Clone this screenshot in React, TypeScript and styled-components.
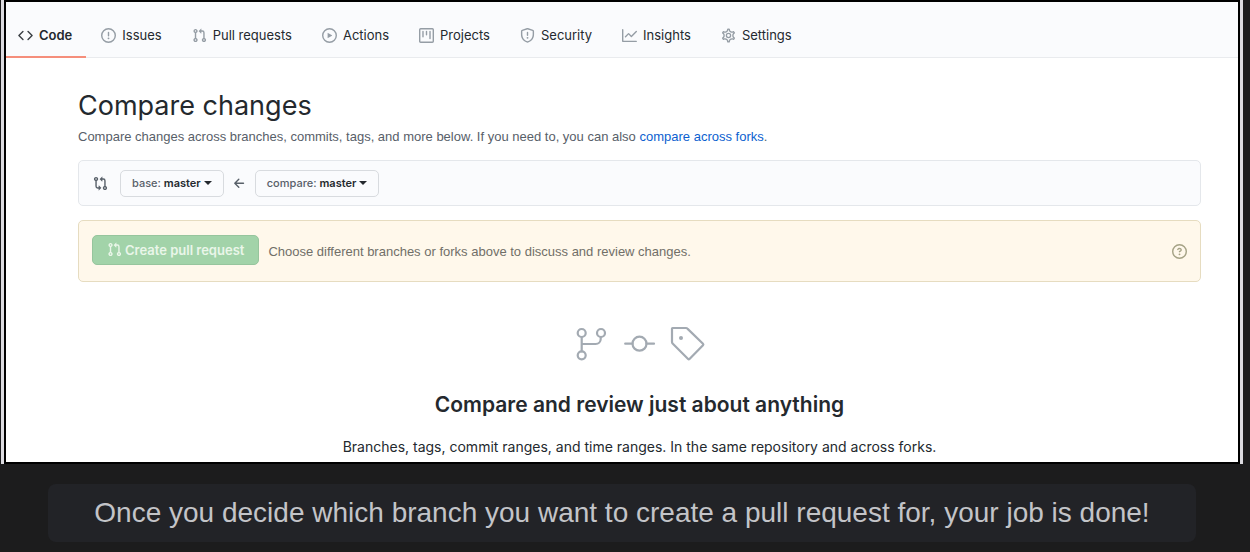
import React from "react";
import styled, { createGlobalStyle } from "styled-components";

const GlobalStyle = createGlobalStyle`
  * { box-sizing: border-box; }
  body {
    margin: 0;
    background: #1c1c1d;
    font-family: Inter, "Liberation Sans", sans-serif;
    color: #24292e;
  }
`;

const Page = styled.div`
  overflow: hidden;
`;

const Frame = styled.div`
  margin: 0 7px 0 1px;
  border: solid #dcdbe0;
  border-width: 0 3px;
`;

const Shot = styled.main`
  border: 2px solid #000;
  background: #fff;
`;

const Nav = styled.nav`
  display: flex;
  height: 56px;
  background: #fafbfd;
  border-bottom: 1px solid #e9ebee;
`;

const Tab = styled.a<{ $active?: boolean }>`
  display: flex;
  align-items: center;
  gap: 6px;
  height: 56px;
  padding: 12px ${(p) => (p.$active ? 14 : 15)}px 0 ${(p) => (p.$active ? 12 : 15)}px;
  border-bottom: 2px solid ${(p) => (p.$active ? "#f58e7b" : "transparent")};
  color: #24292e;
  font-size: 13px;
  line-height: 20px;
  font-weight: ${(p) => (p.$active ? 600 : 400)};
  text-decoration: none;
  white-space: nowrap;
  svg { color: ${(p) => (p.$active ? "#3b4045" : "#959da5")}; }
`;

const Content = styled.div`
  padding: 30px 37px 5px 72px;
`;

const Title = styled.h1`
  margin: 0;
  font-size: 27px;
  line-height: 36px;
  font-weight: 400;
`;

const Lead = styled.p`
  margin: 3px 0 13px;
  color: #586069;
  font-family: "Liberation Sans", sans-serif;
  font-size: 13px;
  line-height: 20px;
`;

const Link = styled.a`
  color: #0c5fd0;
  text-decoration: none;
`;

const RangeBar = styled.section`
  display: flex;
  align-items: center;
  height: 46px;
  padding: 0 14px;
  color: #586069;
  background: #fafbfd;
  border: 1px solid #e4e7eb;
  border-radius: 5px;
`;

const RangeButton = styled.button`
  display: flex;
  align-items: center;
  gap: 3px;
  height: 27px;
  margin: 0 8px 0 12px;
  padding: 0 11px;
  color: #586069;
  background: #fafbfd;
  border: 1px solid #d8dbdf;
  border-radius: 5px;
  font: 500 11px/20px Inter, sans-serif;
  white-space: nowrap;
  & + svg + & { margin-left: 8px; }
  b { color: #24292e; font-weight: 600; }
`;

const Caret = styled.span`
  border: 4px solid transparent;
  border-top-color: #24292e;
  border-bottom: 0;
`;

const Notice = styled.section`
  display: flex;
  align-items: center;
  gap: 9px;
  height: 62px;
  margin-top: 14px;
  padding: 0 13px;
  background: #fff8eb;
  border: 1px solid #e6dcc0;
  border-radius: 5px;
  color: #716f68;
  font-family: "Liberation Sans", sans-serif;
  font-size: 13px;
  line-height: 20px;
`;

const CreateButton = styled.button`
  display: flex;
  align-items: center;
  justify-content: center;
  gap: 3px;
  height: 30px;
  margin-bottom: 3px;
  padding: 0 14px;
  background: #a2d3a9;
  border: 1px solid #96c59d;
  border-radius: 5px;
  color: #eaf6e9;
  font: 600 13px/20px Inter, sans-serif;
  white-space: nowrap;
`;

const NoticeText = styled.span`
  flex: 1;
  padding-top: 2px;
`;

const HelpLink = styled.a`
  display: flex;
  color: #a5a285;
`;

const Blank = styled.section`
  display: flex;
  flex-direction: column;
  align-items: center;
  padding-top: 44px;
  text-align: center;
`;

const IconRow = styled.div`
  display: flex;
  gap: 12px;
  color: #a3aab2;
`;

const BlankTitle = styled.h2`
  margin: 27px 0 0;
  font-size: 21px;
  line-height: 32px;
  font-weight: 600;
`;

const BlankText = styled.p`
  margin: 16px 0 0;
  font-size: 14px;
  line-height: 20px;
`;

const Caption = styled.p`
  margin: 20px 54px 0 48px;
  padding: 13px 20px;
  border-radius: 8px;
  background: #222327;
  color: #c3c4c8;
  font: 28px/32px "Liberation Sans", sans-serif;
  text-align: center;
`;

const CIRCLE = "M8 1.5a6.5 6.5 0 100 13 6.5 6.5 0 000-13zM0 8a8 8 0 1116 0A8 8 0 010 8z";

const paths = {
  code: "M4.72 3.22a.75.75 0 011.06 1.06L2.06 8l3.72 3.72a.75.75 0 11-1.06 1.06L.47 8.53a.75.75 0 010-1.06l4.25-4.25zm6.56 0a.75.75 0 10-1.06 1.06L13.94 8l-3.72 3.72a.75.75 0 101.06 1.06l4.25-4.25a.75.75 0 000-1.06l-4.25-4.25z",
  issue: CIRCLE + "M9 11a1 1 0 11-2 0 1 1 0 012 0zm-.25-6.25a.75.75 0 00-1.5 0v3.5a.75.75 0 001.5 0v-3.5z",
  pull: "M7.177 3.073L9.573.677A.25.25 0 0110 .854v4.792a.25.25 0 01-.427.177L7.177 3.427a.25.25 0 010-.354zM3.75 2.5a.75.75 0 100 1.5.75.75 0 000-1.5zm-2.25.75a2.25 2.25 0 113 2.122v5.256a2.251 2.251 0 11-1.5 0V5.372A2.25 2.25 0 011.5 3.25zM11 2.5h-1V4h1a1 1 0 011 1v5.628a2.251 2.251 0 101.5 0V5A2.5 2.5 0 0011 2.5zm1 10.25a.75.75 0 111.5 0 .75.75 0 01-1.5 0zM3.75 12a.75.75 0 100 1.5.75.75 0 000-1.5z",
  play: CIRCLE + "M6.379 5.227A.25.25 0 006 5.442v5.117a.25.25 0 00.379.214l4.264-2.559a.25.25 0 000-.428L6.379 5.227z",
  project: "M1.75 0A1.75 1.75 0 000 1.75v12.5C0 15.216.784 16 1.75 16h12.5A1.75 1.75 0 0016 14.25V1.75A1.75 1.75 0 0014.25 0H1.75zM1.5 1.75a.25.25 0 01.25-.25h12.5a.25.25 0 01.25.25v12.5a.25.25 0 01-.25.25H1.75a.25.25 0 01-.25-.25V1.75zM11.75 3a.75.75 0 00-.75.75v7.5a.75.75 0 001.5 0v-7.5a.75.75 0 00-.75-.75zm-8.25.75a.75.75 0 011.5 0v5.5a.75.75 0 01-1.5 0v-5.5zM8 3a.75.75 0 00-.75.75v3.5a.75.75 0 001.5 0v-3.5A.75.75 0 008 3z",
  shield: "M7.467.133a1.75 1.75 0 011.066 0l5.25 1.68A1.75 1.75 0 0115 3.48V7c0 1.566-.32 3.182-1.303 4.682-.983 1.498-2.585 2.813-5.032 3.855a1.7 1.7 0 01-1.33 0c-2.447-1.042-4.049-2.357-5.032-3.855C1.32 10.182 1 8.566 1 7V3.48a1.75 1.75 0 011.217-1.667l5.25-1.68zm.61 1.429a.25.25 0 00-.153 0l-5.25 1.68a.25.25 0 00-.174.238V7c0 1.358.275 2.666 1.057 3.86.784 1.194 2.121 2.34 4.366 3.297a.2.2 0 00.154 0c2.245-.956 3.582-2.104 4.366-3.298C13.225 9.666 13.5 8.36 13.5 7V3.48a.25.25 0 00-.174-.237l-5.25-1.68zM9 10.5a1 1 0 11-2 0 1 1 0 012 0zm-.25-5.75a.75.75 0 10-1.5 0v3a.75.75 0 001.5 0v-3z",
  graph: "M1.5 1.75a.75.75 0 00-1.5 0v12.5c0 .414.336.75.75.75h14.5a.75.75 0 000-1.5H1.5V1.75zm14.28 2.53a.75.75 0 00-1.06-1.06L10 7.94 7.53 5.47a.75.75 0 00-1.06 0L3.22 8.72a.75.75 0 001.06 1.06L7 7.06l2.47 2.47a.75.75 0 001.06 0l5.25-5.25z",
  compare: "M9.573.677L7.177 3.073a.25.25 0 000 .354l2.396 2.396A.25.25 0 0010 5.646V4h1a1 1 0 011 1v5.628a2.251 2.251 0 101.5 0V5A2.5 2.5 0 0011 2.5h-1V.854a.25.25 0 00-.427-.177zM6 12v-1.646a.25.25 0 01.427-.177l2.396 2.396a.25.25 0 010 .354l-2.396 2.396A.25.25 0 016 15.146V13.5H5A2.5 2.5 0 012.5 11V5.372a2.25 2.25 0 111.5 0V11a1 1 0 001 1h1zm6.75 0a.75.75 0 100 1.5.75.75 0 000-1.5zM4 3.25a.75.75 0 11-1.5 0 .75.75 0 011.5 0z",
  arrow: "M7.78 12.53a.75.75 0 01-1.06 0L2.47 8.28a.75.75 0 010-1.06l4.25-4.25a.75.75 0 011.06 1.06L4.81 7h7.44a.75.75 0 010 1.5H4.81l2.97 2.97a.75.75 0 010 1.06z",
  question: CIRCLE + "M9 11a1 1 0 11-2 0 1 1 0 012 0zM6.92 6.085c.081-.16.19-.299.34-.398.145-.097.371-.187.74-.187.28 0 .553.087.738.225A.613.613 0 019 6.25c0 .177-.04.264-.077.318a.956.956 0 01-.277.245c-.076.051-.158.1-.258.161l-.007.004a7.728 7.728 0 00-.313.195 2.416 2.416 0 00-.692.661.75.75 0 001.248.832.956.956 0 01.276-.245 5.52 5.52 0 01.26-.16l.006-.004c.093-.057.204-.123.313-.195.222-.149.487-.355.692-.662.214-.32.329-.702.329-1.15 0-.76-.36-1.348-.863-1.725A2.76 2.76 0 008 4c-.631 0-1.155.16-1.572.438-.413.276-.68.638-.849.977a.75.75 0 101.342.67z",
};

const GEAR = "M7.429 1.525a6.593 6.593 0 011.142 0c.036.003.108.036.137.146l.289 1.105c.147.56.55.967.997 1.189.174.086.341.183.501.29.417.278.97.423 1.53.27l1.102-.303c.11-.03.175.016.195.046.219.31.41.641.573.989.014.031.022.11-.059.19l-.815.806c-.411.406-.562.957-.53 1.456a4.588 4.588 0 010 .582c-.032.499.119 1.05.53 1.456l.815.806c.08.08.073.159.059.19a6.494 6.494 0 01-.573.99c-.02.029-.086.074-.195.045l-1.103-.303c-.559-.153-1.112-.008-1.529.27-.16.107-.327.204-.5.29-.449.222-.851.628-.998 1.189l-.289 1.105c-.029.11-.101.143-.137.146a6.613 6.613 0 01-1.142 0c-.036-.003-.108-.037-.137-.146l-.289-1.105c-.147-.56-.55-.967-.997-1.189a4.502 4.502 0 01-.501-.29c-.417-.278-.97-.423-1.53-.27l-1.102.303c-.11.03-.175-.016-.195-.046a6.492 6.492 0 01-.573-.989c-.014-.031-.022-.11.059-.19l.815-.806c.411-.406.562-.957.53-1.456a4.587 4.587 0 010-.582c.032-.499-.119-1.05-.53-1.456l-.815-.806c-.08-.08-.073-.159-.059-.19a6.44 6.44 0 01.573-.99c.02-.029.086-.075.195-.045l1.103.303c.559.153 1.112.008 1.529-.27.16-.107.327-.204.5-.29.449-.222.851-.628.998-1.189l.289-1.105c.029-.11.101-.143.137-.146z";

type IconName = keyof typeof paths | "gear";

const Icon = ({ name, size = 15 }: { name: IconName; size?: number }) => (
  <svg width={size} height={size} viewBox="0 0 16 16" fill="currentColor" aria-hidden="true">
    {name === "gear" ? (
      <g fill="none" stroke="currentColor" strokeWidth="1.4">
        <path d={GEAR} transform="translate(-.4 -.4) scale(1.05)" />
        <circle cx="8" cy="8" r="2.25" />
      </g>
    ) : (
      <path fillRule="evenodd" d={paths[name]} />
    )}
  </svg>
);

const LargeIcon = ({ children }: { children: React.ReactNode }) => (
  <svg width="36" height="36" viewBox="0 0 36 36" fill="none" stroke="currentColor" strokeWidth="2.2" strokeLinecap="round" strokeLinejoin="round" aria-hidden="true">
    {children}
  </svg>
);

const tabs: { icon: IconName; label: string }[] = [
  { icon: "code", label: "Code" },
  { icon: "issue", label: "Issues" },
  { icon: "pull", label: "Pull requests" },
  { icon: "play", label: "Actions" },
  { icon: "project", label: "Projects" },
  { icon: "shield", label: "Security" },
  { icon: "graph", label: "Insights" },
  { icon: "gear", label: "Settings" },
];

export default function App() {
  return (
    <Page>
      <GlobalStyle />
      <Frame>
        <Shot>
          <Nav>
            {tabs.map((t, i) => (
              <Tab key={t.label} href="#" $active={i === 0}>
                <Icon name={t.icon} />
                {t.label}
              </Tab>
            ))}
          </Nav>
          <Content>
            <Title>Compare changes</Title>
            <Lead>
              Compare changes across branches, commits, tags, and more below. If you need to, you can also{" "}
              <Link href="#">compare across forks</Link>.
            </Lead>
            <RangeBar>
              <Icon name="compare" />
              <RangeButton>
                <span>base: <b>master</b></span>
                <Caret />
              </RangeButton>
              <Icon name="arrow" />
              <RangeButton>
                <span>compare: <b>master</b></span>
                <Caret />
              </RangeButton>
            </RangeBar>
            <Notice>
              <CreateButton>
                <Icon name="pull" />
                Create pull request
              </CreateButton>
              <NoticeText>Choose different branches or forks above to discuss and review changes.</NoticeText>
              <HelpLink href="#" aria-label="Help">
                <Icon name="question" />
              </HelpLink>
            </Notice>
            <Blank>
              <IconRow>
                <LargeIcon>
                  <circle cx="7.7" cy="7" r="4" />
                  <circle cx="27" cy="7" r="4" />
                  <circle cx="7.7" cy="29.3" r="4" />
                  <path d="M7.7 11v14.3M7.7 18h14a5 5 0 0 0 5-5v-2" />
                </LargeIcon>
                <LargeIcon>
                  <circle cx="17.5" cy="17.7" r="7" />
                  <path d="M3.2 17.7h7.3M24.5 17.7h7.500" />
                </LargeIcon>
                <LargeIcon>
                  <path d="M2.500 2h13.500a2 2 0 0 1 1.400.600L33 17.800a1 1 0 0 1 0 1.400L19.500 33a1 1 0 0 1-1.400 0L2.600 17.500a2 2 0 0 1-.600-1.400V2.500a.5.5 0 0 1 .5-.5z" />
                  <circle cx="11" cy="12" r="2" fill="currentColor" stroke="none" />
                </LargeIcon>
              </IconRow>
              <BlankTitle>Compare and review just about anything</BlankTitle>
              <BlankText>Branches, tags, commit ranges, and time ranges. In the same repository and across forks.</BlankText>
            </Blank>
          </Content>
        </Shot>
      </Frame>
      <Caption>Once you decide which branch you want to create a pull request for, your job is done!</Caption>
    </Page>
  );
}
